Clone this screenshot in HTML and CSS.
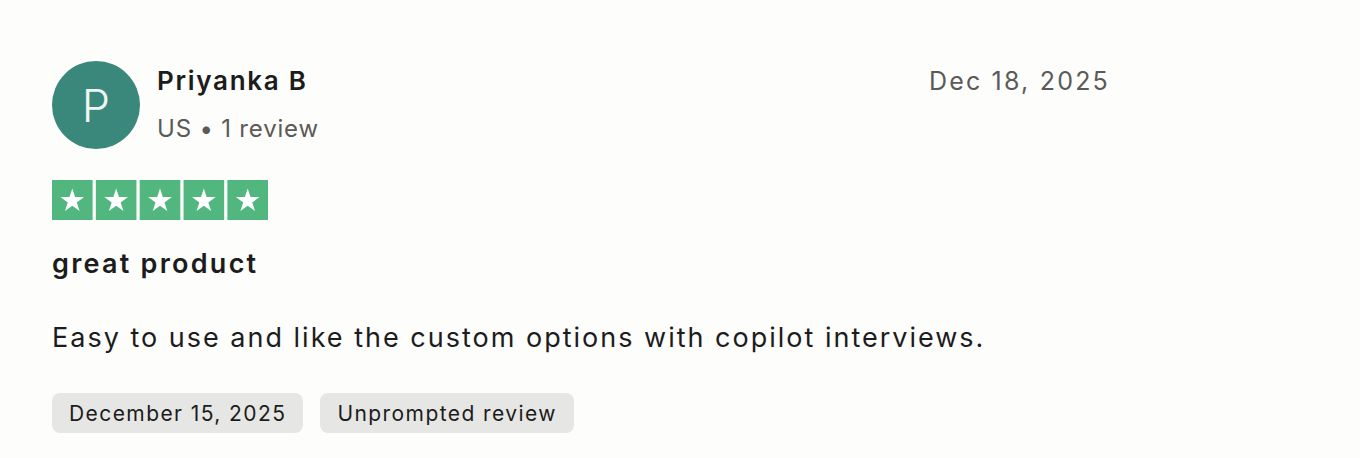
FILE: index.html
```html
<!DOCTYPE html>
<html lang="en">
<head>
<meta charset="utf-8">
<title>Review</title>
<link rel="stylesheet" href="styles.css">
</head>
<body>
<article class="review">
  <header class="review-head">
    <div class="consumer">
      <div class="avatar">P</div>
      <div class="consumer-info">
        <div class="name">Priyanka B</div>
        <div class="meta">US • 1 review</div>
      </div>
    </div>
    <time class="posted">Dec 18, 2025</time>
  </header>
  <div class="stars" aria-label="Rated 5 out of 5 stars">
    <svg width="216" height="40" viewBox="0 0 216 40">
      <g fill="#52b77f">
        <rect x="0" y="0" width="40.6" height="40"/>
        <rect x="43.85" y="0" width="40.6" height="40"/>
        <rect x="87.7" y="0" width="40.6" height="40"/>
        <rect x="131.55" y="0" width="40.6" height="40"/>
        <rect x="175.4" y="0" width="40.6" height="40"/>
      </g>
      <g fill="#ffffff">
        <path id="s" d="M20.3 8.5 L23.1 17.1 L32.1 17.1 L24.8 22.4 L27.6 31 L20.3 25.7 L13 31 L15.8 22.4 L8.5 17.1 L17.5 17.1 Z"/>
        <use href="#s" x="43.85"/>
        <use href="#s" x="87.7"/>
        <use href="#s" x="131.55"/>
        <use href="#s" x="175.4"/>
      </g>
    </svg>
  </div>
  <h2 class="title">great product</h2>
  <p class="body">Easy to use and like the custom options with copilot interviews.</p>
  <div class="tags">
    <span class="tag">December 15, 2025</span>
    <span class="tag">Unprompted review</span>
  </div>
</article>
</body>
</html>
```
FILE: styles.css
```css
html, body {
  margin: 0;
  padding: 0;
  background: #fdfdfc;
}
body {
  font-family: Inter, "Noto Sans", "Liberation Sans", sans-serif;
  color: #1c1c1c;
}
.review {
  width: 1058px;
  padding: 61px 0 0 52px;
}
.review-head {
  display: flex;
  justify-content: space-between;
  align-items: flex-start;
}
.consumer {
  display: flex;
  align-items: flex-start;
  gap: 17px;
}
.avatar {
  width: 88px;
  height: 88px;
  border-radius: 50%;
  background: #3a887b;
  color: #eef6f4;
  font-size: 45px;
  font-weight: 300;
  display: flex;
  align-items: center;
  justify-content: center;
}
.consumer-info {
  display: flex;
  flex-direction: column;
  padding-top: 2px;
}
.name {
  font-size: 26px;
  font-weight: 600;
  line-height: 36px;
  letter-spacing: 1.7px;
}
.meta {
  font-size: 24px;
  line-height: 36px;
  margin-top: 12px;
  color: #5b5a56;
  letter-spacing: 0.8px;
}
.posted {
  font-size: 25px;
  line-height: 36px;
  margin-top: 2px;
  color: #5b5a56;
  letter-spacing: 2.2px;
}
.stars {
  margin-top: 31px;
  height: 40px;
}
.stars svg { display: block; }
.title {
  margin: 25px 0 0;
  font-size: 27px;
  font-weight: 600;
  line-height: 38px;
  letter-spacing: 2.25px;
}
.body {
  margin: 36px 0 0;
  font-size: 27px;
  line-height: 38px;
  font-weight: 400;
  letter-spacing: 2px;
}
.tags {
  display: flex;
  gap: 17px;
  margin-top: 36px;
}
.tag {
  background: #e6e6e4;
  border-radius: 8px;
  height: 40px;
  padding: 0 17px;
  display: flex;
  align-items: center;
  font-size: 21px;
  color: #1c1c1c;
  letter-spacing: 1.42px;
}
```
